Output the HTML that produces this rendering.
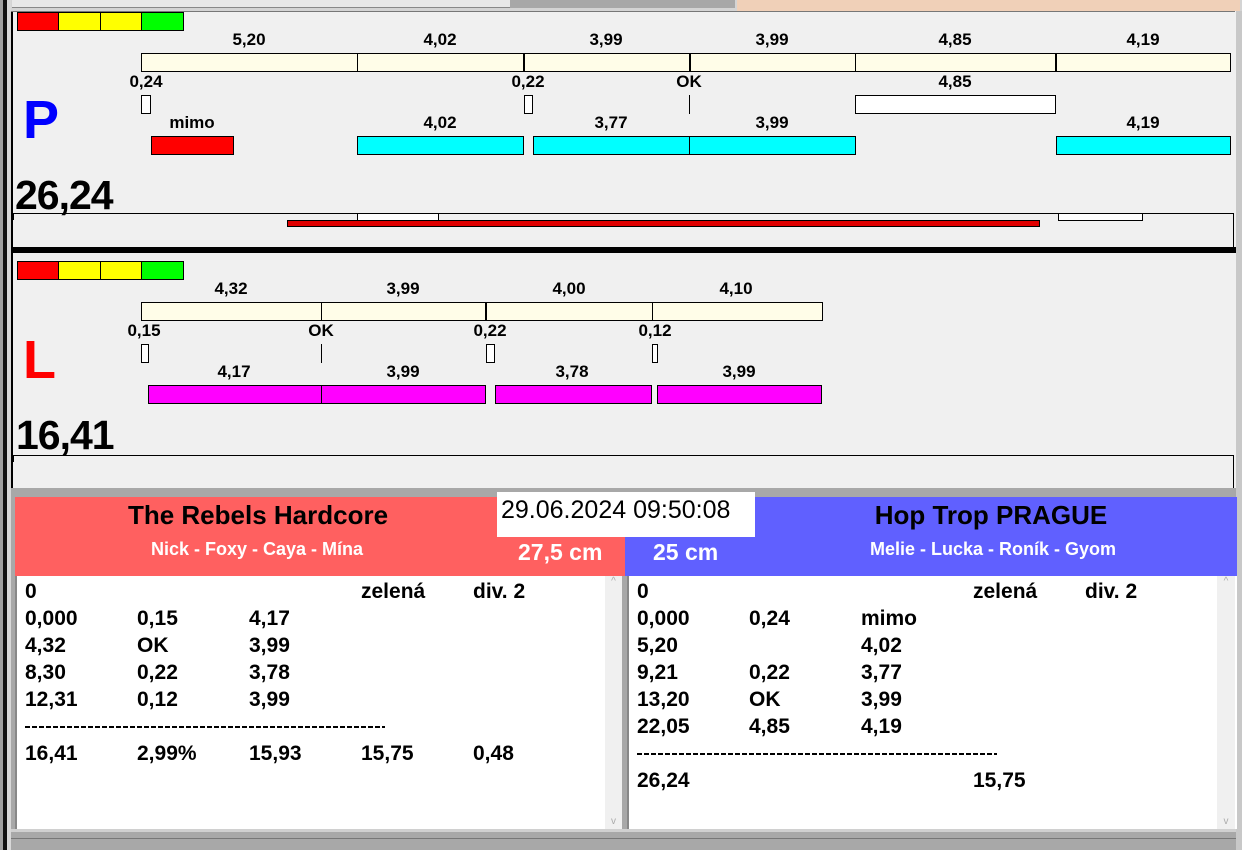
<!DOCTYPE html>
<html><head><meta charset="utf-8"><style>
*{margin:0;padding:0;box-sizing:border-box}
body{width:1242px;height:850px;background:#f0f0f0;position:relative;overflow:hidden;font-family:"Liberation Sans",Arial,sans-serif;font-weight:bold;color:#000}
.a{position:absolute}
.r{position:absolute;border:1px solid #000}
.t{position:absolute;font-size:17px;transform:translateX(-50%);white-space:nowrap;line-height:18px}
.l{position:absolute;font-size:21px;line-height:27px;white-space:pre}
.d{position:absolute;width:360px;height:2px;background:repeating-linear-gradient(90deg,#000 0 5px,transparent 5px 7px)}
</style></head><body>
<div class="a" style="left:0;top:0;width:1242px;height:11px;background:#d4d4d4"></div>
<div class="a" style="left:12px;top:0;width:723px;height:8px;background:#e8e8e8;border-bottom:1px solid #888"></div>
<div class="a" style="left:510px;top:0;width:225px;height:8px;background:#a8a8a8"></div>
<div class="a" style="left:737px;top:0;width:503px;height:11px;background:#f0d0b8"></div>
<div class="a" style="left:0;top:0;width:3px;height:850px;background:#a0a0a0"></div>
<div class="a" style="left:3px;top:0;width:4px;height:850px;background:#111"></div>
<div class="a" style="left:7px;top:0;width:4px;height:850px;background:#d8d8d8"></div>
<div class="a" style="left:11px;top:11px;width:2px;height:478px;background:#000"></div>
<div class="a" style="left:11px;top:11px;width:1224px;height:1px;background:#777"></div>
<div class="a" style="left:1236px;top:11px;width:6px;height:839px;background:#c8c8c8"></div>

<div class="r" style="left:17px;top:12px;width:42px;height:19px;background:#f00"></div>
<div class="r" style="left:58px;top:12px;width:43px;height:19px;background:#ff0"></div>
<div class="r" style="left:100px;top:12px;width:42px;height:19px;background:#ff0"></div>
<div class="r" style="left:141px;top:12px;width:43px;height:19px;background:#0f0"></div>

<div class="t" style="left:249px;top:31px">5,20</div>
<div class="t" style="left:440px;top:31px">4,02</div>
<div class="t" style="left:606px;top:31px">3,99</div>
<div class="t" style="left:772px;top:31px">3,99</div>
<div class="t" style="left:955px;top:31px">4,85</div>
<div class="t" style="left:1143px;top:31px">4,19</div>
<div class="r" style="left:141px;top:53px;width:1090px;height:19px;background:#fffde8"></div>
<div class="a" style="left:357px;top:53px;width:1px;height:19px;background:#000"></div>
<div class="a" style="left:523px;top:53px;width:2px;height:19px;background:#000"></div>
<div class="a" style="left:689px;top:53px;width:2px;height:19px;background:#000"></div>
<div class="a" style="left:855px;top:53px;width:1px;height:19px;background:#000"></div>
<div class="a" style="left:1055px;top:53px;width:2px;height:19px;background:#000"></div>

<div class="t" style="left:146px;top:73px">0,24</div>
<div class="t" style="left:528px;top:73px">0,22</div>
<div class="t" style="left:689px;top:73px">OK</div>
<div class="t" style="left:955px;top:73px">4,85</div>
<div class="r" style="left:141px;top:95px;width:10px;height:19px;background:#fff"></div>
<div class="r" style="left:524px;top:95px;width:9px;height:19px;background:#fff"></div>
<div class="a" style="left:689px;top:95px;width:1px;height:19px;background:#000"></div>
<div class="r" style="left:855px;top:95px;width:201px;height:19px;background:#fff"></div>

<div class="t" style="left:192px;top:114px">mimo</div>
<div class="t" style="left:440px;top:114px">4,02</div>
<div class="t" style="left:611px;top:114px">3,77</div>
<div class="t" style="left:772px;top:114px">3,99</div>
<div class="t" style="left:1143px;top:114px">4,19</div>
<div class="r" style="left:151px;top:136px;width:83px;height:19px;background:#f00"></div>
<div class="r" style="left:357px;top:136px;width:167px;height:19px;background:#0ff"></div>
<div class="r" style="left:533px;top:136px;width:157px;height:19px;background:#0ff"></div>
<div class="r" style="left:689px;top:136px;width:167px;height:19px;background:#0ff"></div>
<div class="r" style="left:1056px;top:136px;width:175px;height:19px;background:#0ff"></div>

<div class="a" style="left:23px;top:90px;font-size:54px;line-height:60px;color:#0000ff">P</div>
<div class="a" style="left:15px;top:173px;font-size:41px;line-height:44px;letter-spacing:-1px">26,24</div>
<div class="a" style="left:12px;top:213px;width:1222px;height:1px;background:#000"></div>
<div class="a" style="left:13px;top:213px;width:1px;height:7px;background:#000"></div>
<div class="a" style="left:1233px;top:213px;width:1px;height:34px;background:#000"></div>
<div class="r" style="left:357px;top:213px;width:82px;height:8px;background:#fff"></div>
<div class="r" style="left:287px;top:220px;width:753px;height:7px;background:#e00000"></div>
<div class="r" style="left:1058px;top:213px;width:85px;height:8px;background:#fff"></div>
<div class="a" style="left:11px;top:247px;width:1225px;height:6px;background:#000"></div>

<div class="r" style="left:17px;top:261px;width:42px;height:19px;background:#f00"></div>
<div class="r" style="left:58px;top:261px;width:43px;height:19px;background:#ff0"></div>
<div class="r" style="left:100px;top:261px;width:42px;height:19px;background:#ff0"></div>
<div class="r" style="left:141px;top:261px;width:43px;height:19px;background:#0f0"></div>

<div class="t" style="left:231px;top:280px">4,32</div>
<div class="t" style="left:403px;top:280px">3,99</div>
<div class="t" style="left:569px;top:280px">4,00</div>
<div class="t" style="left:736px;top:280px">4,10</div>
<div class="r" style="left:141px;top:302px;width:682px;height:19px;background:#fffde8"></div>
<div class="a" style="left:321px;top:302px;width:1px;height:19px;background:#000"></div>
<div class="a" style="left:485px;top:302px;width:2px;height:19px;background:#000"></div>
<div class="a" style="left:652px;top:302px;width:1px;height:19px;background:#000"></div>

<div class="t" style="left:144px;top:322px">0,15</div>
<div class="t" style="left:321px;top:322px">OK</div>
<div class="t" style="left:490px;top:322px">0,22</div>
<div class="t" style="left:655px;top:322px">0,12</div>
<div class="r" style="left:141px;top:344px;width:8px;height:19px;background:#fff"></div>
<div class="a" style="left:321px;top:344px;width:1px;height:19px;background:#000"></div>
<div class="r" style="left:486px;top:344px;width:9px;height:19px;background:#fff"></div>
<div class="r" style="left:652px;top:344px;width:6px;height:19px;background:#fff"></div>

<div class="t" style="left:234px;top:363px">4,17</div>
<div class="t" style="left:403px;top:363px">3,99</div>
<div class="t" style="left:572px;top:363px">3,78</div>
<div class="t" style="left:739px;top:363px">3,99</div>
<div class="r" style="left:148px;top:385px;width:174px;height:19px;background:#f0f"></div>
<div class="r" style="left:321px;top:385px;width:165px;height:19px;background:#f0f"></div>
<div class="r" style="left:495px;top:385px;width:157px;height:19px;background:#f0f"></div>
<div class="r" style="left:657px;top:385px;width:165px;height:19px;background:#f0f"></div>

<div class="a" style="left:23px;top:330px;font-size:54px;line-height:60px;color:#f00">L</div>
<div class="a" style="left:16px;top:413px;font-size:41px;line-height:44px;letter-spacing:-1px">16,41</div>
<div class="a" style="left:12px;top:455px;width:1222px;height:1px;background:#000"></div>
<div class="a" style="left:13px;top:455px;width:1px;height:7px;background:#000"></div>
<div class="a" style="left:1233px;top:455px;width:1px;height:34px;background:#000"></div>

<div class="a" style="left:11px;top:488px;width:1225px;height:362px;background:#a8a8a8"></div>
<div class="a" style="left:15px;top:497px;width:610px;height:79px;background:#ff6060"></div>
<div class="a" style="left:625px;top:497px;width:612px;height:79px;background:#6060ff"></div>
<div class="a" style="left:497px;top:492px;width:258px;height:45px;background:#fff;font-weight:normal;font-size:25px;line-height:36px;padding-left:4px">29.06.2024 09:50:08</div>
<div class="t" style="left:258px;top:500px;font-size:26px;line-height:30px">The Rebels Hardcore</div>
<div class="t" style="left:257px;top:538px;font-size:18px;line-height:22px;color:#fff">Nick - Foxy - Caya - Mína</div>
<div class="a" style="left:518px;top:538px;font-size:23px;line-height:28px;color:#fff">27,5 cm</div>
<div class="a" style="left:653px;top:538px;font-size:23px;line-height:28px;color:#fff">25 cm</div>
<div class="t" style="left:991px;top:500px;font-size:26px;line-height:30px">Hop Trop PRAGUE</div>
<div class="t" style="left:993px;top:538px;font-size:18px;line-height:22px;color:#fff">Melie - Lucka - Roník - Gyom</div>

<div class="a" style="left:15px;top:576px;width:607px;height:253px;background:#fff;border-left:2px solid #888"></div>
<div class="a" style="left:605px;top:576px;width:17px;height:253px;background:#f0f0f0;color:#aaa;font-size:10px;font-weight:normal;text-align:center">^<div style="position:absolute;bottom:2px;width:17px">v</div></div>
<div class="a" style="left:627px;top:576px;width:610px;height:253px;background:#fff;border-left:2px solid #888"></div>
<div class="a" style="left:1217px;top:576px;width:18px;height:253px;background:#f0f0f0;color:#aaa;font-size:10px;font-weight:normal;text-align:center">^<div style="position:absolute;bottom:2px;width:18px">v</div></div>
<div class="a" style="left:11px;top:829px;width:1225px;height:3px;background:#d0d0d0"></div>
<div class="a" style="left:11px;top:838px;width:1225px;height:1px;background:#777"></div>

<div class="l" style="left:25px;top:578px">0</div><div class="l" style="left:361px;top:578px">zelená</div><div class="l" style="left:473px;top:578px">div. 2</div>
<div class="l" style="left:25px;top:605px">0,000</div><div class="l" style="left:137px;top:605px">0,15</div><div class="l" style="left:249px;top:605px">4,17</div>
<div class="l" style="left:25px;top:632px">4,32</div><div class="l" style="left:137px;top:632px">OK</div><div class="l" style="left:249px;top:632px">3,99</div>
<div class="l" style="left:25px;top:659px">8,30</div><div class="l" style="left:137px;top:659px">0,22</div><div class="l" style="left:249px;top:659px">3,78</div>
<div class="l" style="left:25px;top:686px">12,31</div><div class="l" style="left:137px;top:686px">0,12</div><div class="l" style="left:249px;top:686px">3,99</div>
<div class="d" style="left:25px;top:726px"></div>
<div class="l" style="left:25px;top:740px">16,41</div><div class="l" style="left:137px;top:740px">2,99%</div><div class="l" style="left:249px;top:740px">15,93</div><div class="l" style="left:361px;top:740px">15,75</div><div class="l" style="left:473px;top:740px">0,48</div>

<div class="l" style="left:637px;top:578px">0</div><div class="l" style="left:973px;top:578px">zelená</div><div class="l" style="left:1085px;top:578px">div. 2</div>
<div class="l" style="left:637px;top:605px">0,000</div><div class="l" style="left:749px;top:605px">0,24</div><div class="l" style="left:861px;top:605px">mimo</div>
<div class="l" style="left:637px;top:632px">5,20</div><div class="l" style="left:861px;top:632px">4,02</div>
<div class="l" style="left:637px;top:659px">9,21</div><div class="l" style="left:749px;top:659px">0,22</div><div class="l" style="left:861px;top:659px">3,77</div>
<div class="l" style="left:637px;top:686px">13,20</div><div class="l" style="left:749px;top:686px">OK</div><div class="l" style="left:861px;top:686px">3,99</div>
<div class="l" style="left:637px;top:713px">22,05</div><div class="l" style="left:749px;top:713px">4,85</div><div class="l" style="left:861px;top:713px">4,19</div>
<div class="d" style="left:637px;top:753px"></div>
<div class="l" style="left:637px;top:767px">26,24</div><div class="l" style="left:973px;top:767px">15,75</div>
</body></html>
